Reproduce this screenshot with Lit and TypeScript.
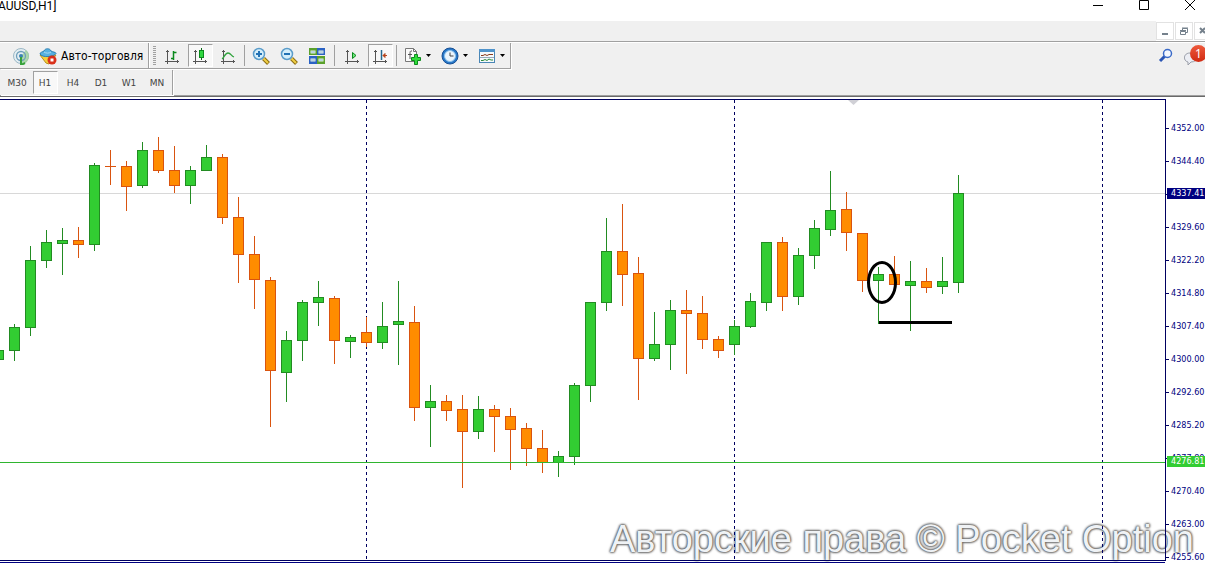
import { LitElement, html, css, svg } from "lit";
import { customElement } from "lit/decorators.js";
import { classMap } from "lit/directives/class-map.js";

type Candle = [kind: "up" | "down", high: number, low: number, top: number, bottom: number];

const STEP = 16;
const FIRST_X = -2;

/* One entry per hour: direction, wick top, wick bottom, body top, body bottom. */
const CANDLES: Candle[] = [
  ["up", 250, 260, 250, 260],
  ["up", 224, 261, 227, 251],
  ["up", 146, 236, 160, 228],
  ["up", 130, 168, 142, 161],
  ["up", 128, 175, 140, 144],
  ["down", 127, 158, 140, 145],
  ["up", 63, 151, 65, 145],
  ["down", 50, 85, 66, 67],
  ["down", 61, 111, 66, 87],
  ["up", 42, 88, 50, 86],
  ["down", 37, 73, 50, 71],
  ["down", 46, 93, 70, 86],
  ["up", 66, 104, 70, 86],
  ["up", 45, 71, 57, 71],
  ["down", 54, 124, 57, 118],
  ["down", 97, 183, 117, 155],
  ["down", 136, 209, 154, 180],
  ["down", 177, 327, 180, 271],
  ["up", 231, 302, 240, 273],
  ["up", 200, 261, 202, 241],
  ["up", 181, 226, 197, 203],
  ["down", 196, 264, 198, 241],
  ["up", 235, 258, 237, 242],
  ["down", 217, 247, 232, 243],
  ["up", 202, 249, 226, 243],
  ["up", 181, 265, 221, 225],
  ["down", 206, 321, 222, 308],
  ["up", 285, 347, 301, 308],
  ["down", 295, 321, 301, 311],
  ["down", 295, 388, 309, 332],
  ["up", 296, 339, 309, 332],
  ["down", 305, 352, 309, 317],
  ["down", 308, 370, 316, 330],
  ["down", 323, 366, 328, 349],
  ["down", 330, 373, 348, 363],
  ["up", 351, 377, 356, 363],
  ["up", 283, 365, 285, 357],
  ["up", 202, 302, 202, 286],
  ["up", 118, 211, 151, 203],
  ["down", 104, 206, 151, 175],
  ["down", 157, 300, 173, 259],
  ["up", 212, 261, 244, 259],
  ["up", 200, 270, 210, 245],
  ["down", 190, 274, 210, 214],
  ["down", 196, 249, 213, 240],
  ["down", 236, 258, 239, 251],
  ["up", 220, 255, 226, 245],
  ["up", 193, 228, 201, 227],
  ["up", 142, 211, 142, 203],
  ["down", 137, 211, 142, 197],
  ["up", 148, 205, 155, 197],
  ["up", 120, 169, 128, 156],
  ["up", 71, 136, 110, 130],
  ["down", 92, 151, 109, 133],
  ["down", 133, 192, 133, 181],
  ["up", 167, 224, 174, 181],
  ["down", 156, 185, 174, 185],
  ["up", 161, 231, 181, 186],
  ["down", 168, 193, 181, 188],
  ["up", 157, 194, 181, 187],
  ["up", 75, 193, 93, 183],
];

const DAY_BREAKS = [366, 734, 1102];

const PRICES = [
  "4352.00", "4344.40", "4337.00", "4329.60", "4322.20", "4314.80", "4307.40",
  "4300.00", "4292.60", "4285.20", "4277.80", "4270.40", "4263.00", "4255.60",
];

const PERIODS = ["M30", "H1", "H4", "D1", "W1", "MN"];

const axes = svg`<path d="M4.5 3v14M2 14.5h14M3 4.500h3M14.500 13v3" stroke="#555" fill="none"/>`;

const icon = (body: unknown, w = 18, h = 18) =>
  html`<svg width=${w} height=${h} viewBox="0 0 ${w} ${h}" aria-hidden="true">${body}</svg>`;

const magnifier = (plus: boolean) => icon(svg`
  <path d="M11.5 11.5l5 5" stroke="#8c6d14" stroke-width="4"/>
  <path d="M11.5 11.5l4.5 4.5" stroke="#f0cf45" stroke-width="2"/>
  <circle cx="7" cy="7" r="5.5" fill="#d5effb" stroke="#5a9cca" stroke-width="1.5"/>
  <path d="M4 7h6" stroke="#2272b5" stroke-width="2"/>
  ${plus ? svg`<path d="M7 4v6" stroke="#2272b5" stroke-width="2"/>` : null}`);

const ICONS = {
  signal: icon(svg`
    <circle cx="9" cy="9" r="7.5" fill="#e4eef2" stroke="#9bb8c6"/>
    <path d="M9 9v8.500a8 8 0 0 0 8-8.500a8 8 0 0 0-3-6z" fill="#9fd29b" opacity=".8"/>
    <circle cx="9" cy="9" r="4.500" fill="none" stroke="#6f9fbb" stroke-width="1.3"/>
    <circle cx="9" cy="9" r="2" fill="#3b82b5"/>
    <path d="M9 10v7.500c2-.3 3-1 4-1.500" stroke="#35a23a" stroke-width="2" fill="none"/>`),
  auto: icon(svg`
    <path d="M1 8l6 8 3 1 7-9z" fill="#f5cf3c" stroke="#b8901d"/>
    <path d="M1 7c0-2 3-2 4-3 1-3 6-3 7 0 1 1 5 1 5 2.500C15 10 3 11 1 7z" fill="#57b1e0" stroke="#2b7fb2"/>
    <path d="M5 5c2 1.500 5 1.500 7 0" stroke="#a9dcf5" fill="none"/>
    <circle cx="13" cy="13" r="4.500" fill="#d9301a"/><rect x="11.500" y="11.500" width="3" height="3" fill="#fff"/>`),
  bars: icon(svg`${axes}<path d="M10.500 4v9M11 5.500h2.500M8 11.500h2.500" stroke="#0a8a1c" stroke-width="1.500" fill="none"/>`),
  candles: icon(svg`${axes}<path d="M10.500 1v12" stroke="#0a6a16"/><rect x="8.500" y="3.500" width="4" height="7" fill="#2fd63f" stroke="#0a8a1c"/>`),
  line: icon(svg`${axes}<path d="M3 12c2-1 3-6 6-6s3 3 6 4" stroke="#2fa33c" stroke-width="1.300" fill="none"/>`),
  tile: icon(svg`
    <rect x="1" y="1" width="8" height="7" fill="#5aa02c"/><rect x="9" y="1" width="8" height="7" fill="#2a62c4"/>
    <rect x="1" y="9" width="8" height="8" fill="#2a62c4"/><rect x="9" y="9" width="8" height="8" fill="#5aa02c"/>
    <path d="M2.500 3.500h5v3h-5zM10.500 3.500h5v3h-5zM2.500 11.500h5v3h-5zM10.500 11.500h5v3h-5z" fill="#e8f4e4"/>
    <path d="M3 5h4M11 5h4M3 13h4M11 13h4" stroke="#8fb6dd"/>`),
  scroll: icon(svg`${axes}<path d="M9.500 5.500v6l3.500-3z" fill="#6fe67a" stroke="#0a8a1c"/>`),
  shift: icon(svg`${axes}<path d="M10.500 3v10" stroke="#23688f" stroke-width="1.500"/><path d="M12 8.500h4M14 6.500v4l-2-2z" stroke="#b5441c" fill="#b5441c"/>`),
  indicator: icon(svg`
    <path d="M1.500 1.500h8l3 3v10h-11z" fill="#fafafa" stroke="#777"/><path d="M9.500 1.500v3h3" fill="none" stroke="#777"/>
    <path d="M8 4c-2-.5-2 1-2 3v5M4 7.500h4" stroke="#555" fill="none"/>
    <path d="M7.500 10.500h3v-3h3v3h3v3h-3v4h-3v-4h-3z" fill="#2fdc3a" stroke="#0d8a1c"/>`),
  clock: icon(svg`
    <circle cx="9" cy="9" r="8" fill="#2878c8" stroke="#174f94"/><circle cx="9" cy="9" r="5.500" fill="#eaf5fd" stroke="#8dc3ee"/>
    <path d="M9 5.500V9h3.500" stroke="#444" fill="none"/>`),
  template: icon(svg`
    <rect x="1.500" y="2.500" width="15" height="13" fill="#f6fafc" stroke="#4a86b5"/><rect x="1" y="2" width="16" height="3" fill="#4f93cb"/>
    <path d="M3 8.500h2l2-1 2 1 2-1h4" stroke="#8a3a1c" fill="none"/><path d="M2 10.500h14" stroke="#9ab"/>
    <path d="M3 13.500h2l2-1 2 1 2-1.500 2 1h2" stroke="#2d8a3c" fill="none"/>`),
  caret: icon(svg`<path d="M0 0h5L2.500 3z" fill="#000"/>`, 5, 3),
};

@customElement("app-title-bar")
class AppTitleBar extends LitElement {
  static styles = css`
    :host { display: block; color: #000; }
    .title { display: flex; justify-content: space-between; height: 21px; background: #fff; overflow: hidden; }
    .name { margin: 0; margin-left: -2px; font: 12px/12px Roboto, sans-serif; }
    .controls { display: flex; gap: 28px; margin-right: 6px; }
    button { display: block; padding: 0; border: 0; background: none; }
    .controls button { width: 18px; height: 12px; }
    .menu { display: flex; justify-content: flex-end; height: 20px; background: #f0f0f0; border-bottom: 1px solid #a0a0a0; overflow: hidden; }
    .windows { display: flex; gap: 1px; margin-right: -7px; background: #fff; align-items: center; }
    .windows button { width: 18px; height: 18px; border: 1px solid #e2e2e2; background: #fff; }
    svg { display: block; margin: auto; }
  `;
  render() {
    return html`
      <header class="title">
        <h1 class="name">AUUSD,H1]</h1>
        <div class="controls">
          <button aria-label="Minimize">${icon(svg`<path d="M0 5.500h10" stroke="#000"/>`, 10, 12)}</button>
          <button aria-label="Maximize">${icon(svg`<path d="M.5 .5h9v9h-9z" fill="none" stroke="#000"/>`, 10, 12)}</button>
          <button aria-label="Close">${icon(svg`<path d="M0 0l10 10M10 0L0 10" stroke="#000"/>`, 10, 12)}</button>
        </div>
      </header>
      <div class="menu">
        <div class="windows">
          <button aria-label="Minimize chart">${icon(svg`<path d="M1 9h6" stroke="#75818c" stroke-width="2"/>`, 8, 12)}</button>
          <button aria-label="Restore chart">${icon(svg`<path d="M2.500 3V1.500h5v4H6M.5 4.500h5v3h-5zM0 3.500h6M2 1h6" fill="none" stroke="#75818c"/>`, 8, 8)}</button>
          <button aria-label="Close chart">${icon(svg`<path d="M1 1l5 5M6 1L1 6" stroke="#75818c" stroke-width="2"/>`, 8, 8)}</button>
        </div>
      </div>`;
  }
}

@customElement("app-toolbar")
class AppToolbar extends LitElement {
  static styles = css`
    :host { display: block; background: #f0f0f0; border-top: 1px solid #fff; border-bottom: 1px solid #696969; }
    .rows { border-bottom: 1px solid #a0a0a0; display: flex; justify-content: space-between; align-items: flex-start; }
    .row { display: flex; align-items: center; width: max-content; height: 25px; border-right: 1px solid #a0a0a0; border-bottom: 1px solid #a0a0a0; box-shadow: 1px 1px #fff; }
    .periods { border-bottom: 0; padding-left: 3px; padding-right: 1px; margin-top: 1px; box-sizing: border-box; }
    button { box-sizing: border-box; display: flex; align-items: center; justify-content: center; width: 28px; height: 25px; padding: 0; border: 0; background: none; color: #444; font: 9px/12px "DejaVu Sans", sans-serif; }
    .face { display: flex; align-items: center; justify-content: center; box-sizing: border-box; width: 25px; height: 23px; border: 1px solid transparent; }
    .on .face { border-color: #a0a0a0 #fff #fff #a0a0a0; background: #f8f8f8; }
    .wide { width: 37px; gap: 4px; }
    .signal { width: 28px; margin-left: 7px; }
    .auto { width: auto; gap: 4px; margin: 0 5px 0 4px; color: #000; font: 12px/14px "DejaVu Sans Condensed", "Noto Sans", sans-serif; }
    .sep { width: 1px; height: 21px; margin: 0 2px; background: #a0a0a0; }
    .gap { margin: 0 3px; }
    .edge { width: 1px; height: 25px; background: #a0a0a0; border-right: 1px solid #fff; }
    .grip { width: 3px; height: 20px; margin: 0 2px 0 3px; background: repeating-linear-gradient(#a0a0a0 0 1px, #f0f0f0 1px 2px); }
    .right { display: flex; gap: 10px; padding: 4px 0 0; width: 47px; overflow: hidden; }
    .right button { width: 16px; height: 18px; }
    .right .chat { position: relative; width: 24px; justify-content: flex-start; flex: none; }
    .badge { position: absolute; left: 6px; top: -2px; width: 17px; height: 17px; border-radius: 9px; background: linear-gradient(#ee5a3c, #d02a12); color: #fff; font: 12px/17px "Noto Sans", sans-serif; text-align: center; }
    svg { display: block; flex: none; }
  `;
  private tool(glyph: unknown, label: string, on = false) {
    return html`<button class=${classMap({ on })} aria-label=${label} aria-pressed=${on}><span class="face">${glyph}</span></button>`;
  }
  private menu(glyph: unknown, label: string) {
    return html`<button class="wide" aria-label=${label} aria-haspopup="menu">${glyph}${ICONS.caret}</button>`;
  }
  render() {
    return html`
      <div class="rows">
        <div>
          <nav class="row" aria-label="Charts">
            <button class="signal" aria-label="Signals">${ICONS.signal}</button>
            <button class="auto">${ICONS.auto}Авто-торговля</button>
            <span class="edge"></span><span class="grip"></span>
            ${this.tool(ICONS.bars, "Bar chart")}
            ${this.tool(ICONS.candles, "Candlesticks", true)}
            ${this.tool(ICONS.line, "Line chart")}
            <span class="sep"></span>
            ${this.tool(magnifier(true), "Zoom in")}
            ${this.tool(magnifier(false), "Zoom out")}
            ${this.tool(ICONS.tile, "Tile windows")}
            <span class="sep gap"></span>
            ${this.tool(ICONS.scroll, "Auto scroll")}
            ${this.tool(ICONS.shift, "Chart shift", true)}
            <span class="sep"></span>
            ${this.menu(ICONS.indicator, "Indicators")}
            ${this.menu(ICONS.clock, "Periods")}
            ${this.menu(ICONS.template, "Templates")}
          </nav>
          <nav class="row periods" aria-label="Timeframes">
            ${PERIODS.map((p) => html`<button class=${classMap({ on: p === "H1" })}><span class="face">${p}</span></button>`)}
          </nav>
        </div>
        <div class="right">
          <button aria-label="Search">${icon(svg`
            <path d="M7 8L2 13" stroke="#2a55b5" stroke-width="3"/>
            <circle cx="9.500" cy="5.500" r="4" fill="#f4f8ff" stroke="#3a6ac8" stroke-width="1.500"/>`, 16, 16)}</button>
          <button class="chat" aria-label="Notifications">${icon(svg`
            <path d="M6 6c9 0 9 9 1 9l-3 3v-3c-5-1-5-9 2-9z" fill="#eceef4" stroke="#9a9ea8"/>`, 16, 18)}<span class="badge">1</span></button>
        </div>
      </div>`;
  }
}

@customElement("price-chart")
class PriceChart extends LitElement {
  static styles = css`
    :host { display: grid; grid-template-columns: minmax(0, 1fr) 39px; position: relative; overflow: hidden; background: #fff; padding-top: 2px; }
    .main { display: flex; flex-direction: column; position: relative; }
    .plot { flex: 1; min-height: 0; border: 1px solid #000060; border-left: 0; }
    .strip { height: 1px; margin-top: 1px; border-bottom: 1px solid #000080; box-sizing: border-box; margin-right: 1px; }
    svg { display: block; width: 100%; height: 100%; }
    .mark { position: absolute; right: 11px; bottom: 4px; margin: 0; color: #eff2f5; font: 38px/40px "Liberation Sans", sans-serif; white-space: nowrap;
      text-shadow: 0 0 2px #555, 0 0 2px #666, 0 0 3px #777, 0 0 3px #888; }
    .axis { position: relative; margin: 0; padding: 13px 0 0; list-style: none; color: #000080; font: 9px/33px "DejaVu Sans Condensed", "Noto Sans", sans-serif; overflow: hidden; }
    .price { display: flex; align-items: center; gap: 2px; height: 33px; }
    .price::before { content: ""; width: 3px; height: 1px; background: #000060; }
    .tag { position: absolute; left: 1px; right: 0; height: 11px; padding-left: 4px; line-height: 11px; color: #fff; }
    .bid { top: 89px; background: #000080; }
    .level { top: 357px; background: #32cd32; }
    .up { fill: #32cd32; stroke: #228b22; }
    .down { fill: #ff8c00; stroke: #d9540f; }
    .break { stroke: #000060; stroke-dasharray: 3 3; }
    .bidline { stroke: #d8d8d8; }
    .levelline { stroke: #2fb52f; }
    .ink { fill: none; stroke: #000; stroke-width: 3; }
  `;
  private candle([kind, high, low, top, bottom]: Candle, i: number) {
    const x = FIRST_X + STEP * i + 0.5;
    return svg`<g class=${kind}>
      <line x1=${x} x2=${x} y1=${high} y2=${low}></line>
      ${bottom - top > 1
        ? svg`<rect x=${x - 5} y=${top + 0.5} width="10" height=${bottom - top - 1}></rect>`
        : svg`<line x1=${x - 5.5} x2=${x + 5.5} y1=${top + 0.5} y2=${top + 0.5}></line>`}
    </g>`;
  }
  render() {
    return html`
      <p class="mark">Авторские права © Pocket Option</p>
      <div class="main">
        <div class="plot">
          <svg role="img" aria-label="XAUUSD, H1">
            <line class="bidline" x1="0" x2="100%" y1="93.500" y2="93.500"></line>
            ${DAY_BREAKS.map((x) => svg`<line class="break" x1=${x + 0.5} x2=${x + 0.5} y1="0" y2="100%"></line>`)}
            <path d="M848 0h11l-5.500 5z" fill="#d0d0d6"></path>
            ${CANDLES.map((c, i) => this.candle(c, i))}
            <line class="levelline" x1="0" x2="100%" y1="362.500" y2="362.500"></line>
            <ellipse class="ink" cx="882" cy="182.500" rx="13.500" ry="20"></ellipse>
            <line class="ink" x1="879" x2="952" y1="222.500" y2="222.500"></line>
          </svg>
        </div>
        <div class="strip"></div>
      </div>
      <ul class="axis">
        ${PRICES.map((p) => html`<li class="price">${p}</li>`)}
        <li class="tag bid">4337.41</li>
        <li class="tag level">4276.81</li>
      </ul>`;
  }
}

@customElement("app-root")
class AppRoot extends LitElement {
  static styles = css`
    :host { display: flex; flex-direction: column; height: 100vh; overflow: hidden; background: #fff; }
    .chart { flex: 1; min-height: 0; }
  `;
  render() {
    return html`<app-title-bar></app-title-bar><app-toolbar></app-toolbar><price-chart class="chart"></price-chart>`;
  }
}
